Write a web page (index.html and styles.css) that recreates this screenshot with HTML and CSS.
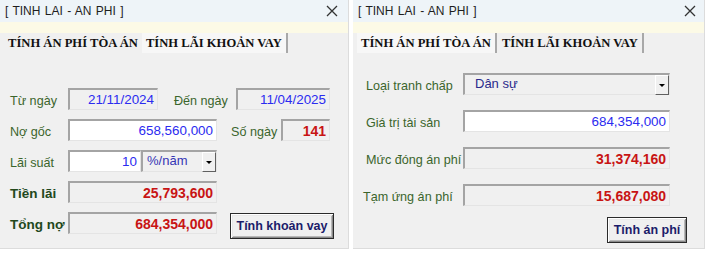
FILE: index.html
```html
<!DOCTYPE html>
<html>
<head>
<meta charset="utf-8">
<link rel="stylesheet" href="styles.css">
</head>
<body>
<div class="screen">
  <div class="win win-left">
    <div class="titlebar">
      <span class="title">[ TINH LAI - AN PHI ]</span>
      <svg class="close" width="12" height="12" viewBox="0 0 12 12"><path d="M1 1L11 11M11 1L1 11" stroke="#333" stroke-width="1.3" fill="none"/></svg>
    </div>
    <div class="strip"></div>
    <div class="tabs">
      <div class="tab">TÍNH ÁN PHÍ TÒA ÁN</div>
      <div class="tab active sep">TÍNH LÃI KHOẢN VAY</div>
    </div>
    <div class="panel loan">
      <div class="row">
        <span class="lbl w58">Từ ngày</span>
        <div class="fld ro blue w90">21/11/2024</div>
        <span class="lbl lbl-den">Đến ngày</span>
        <div class="fld ro blue w94">11/04/2025</div>
      </div>
      <div class="row">
        <span class="lbl w58">Nợ gốc</span>
        <div class="fld white blue w149">658,560,000</div>
        <span class="lbl lbl-so">Số ngày</span>
        <div class="fld ro red w49">141</div>
      </div>
      <div class="row">
        <span class="lbl w58">Lãi suất</span>
        <div class="fld white blue w73">10</div>
        <div class="fld ro combo w76"><span class="combo-text">%/năm</span><span class="arrow"></span></div>
      </div>
      <div class="row">
        <span class="lbl bold w58">Tiền lãi</span>
        <div class="fld ro red w149">25,793,600</div>
      </div>
      <div class="row">
        <span class="lbl bold w58">Tổng nợ</span>
        <div class="fld ro red w149">684,354,000</div>
        <button class="btn btn-loan">Tính khoản vay</button>
      </div>
    </div>
  </div>

  <div class="win win-right">
    <div class="titlebar">
      <span class="title">[ TINH LAI - AN PHI ]</span>
      <svg class="close" width="12" height="12" viewBox="0 0 12 12"><path d="M1 1L11 11M11 1L1 11" stroke="#333" stroke-width="1.3" fill="none"/></svg>
    </div>
    <div class="strip"></div>
    <div class="tabs">
      <div class="tab active sep">TÍNH ÁN PHÍ TÒA ÁN</div>
      <div class="tab sep">TÍNH LÃI KHOẢN VAY</div>
    </div>
    <div class="panel fee">
      <div class="row">
        <span class="lbl w97">Loại tranh chấp</span>
        <div class="fld ro combo w207"><span class="combo-text navy">Dân sự</span><span class="arrow"></span></div>
      </div>
      <div class="row">
        <span class="lbl w97">Giá trị tài sản</span>
        <div class="fld white blue w207">684,354,000</div>
      </div>
      <div class="row">
        <span class="lbl w97">Mức đóng án phí</span>
        <div class="fld ro red w207">31,374,160</div>
      </div>
      <div class="row">
        <span class="lbl w97 lbl-tam">Tạm ứng án phí</span>
        <div class="fld ro red w207">15,687,080</div>
      </div>
      <div class="btn-row">
        <button class="btn btn-fee">Tính án phí</button>
      </div>
    </div>
  </div>
</div>
</body>
</html>
```

FILE: styles.css
```css
* { box-sizing: border-box; }
html, body { margin: 0; padding: 0; background: #ffffff; }
body { width: 709px; height: 256px; overflow: hidden; font-family: "Liberation Sans", Arial, sans-serif; }

.screen { display: flex; gap: 4px; align-items: flex-start; }

.win {
  height: 249px;
  background: #f0f0f0;
  display: flex;
  flex-direction: column;
  border-right: 1px solid #dcdcdc;
  border-bottom: 1px solid #dcdcdc;
}
.win-left { width: 349px; }
.win-right { width: 352px; }

.titlebar {
  height: 22px;
  background: #eef4f8;
  display: flex;
  align-items: center;
  justify-content: space-between;
  padding: 0 10px 0 5px;
}
.win-right .titlebar { padding-right: 8px; }
.title { font-size: 12px; color: #1e1e1e; white-space: pre; word-spacing: 1px; }
.close { display: block; }

.strip { height: 11px; background: #fcfae6; }

.tabs {
  height: 20px;
  display: flex;
  padding-left: 4px;
  background: #f0f0f0;
}
.tab {
  font-family: "Liberation Serif", "Times New Roman", serif;
  font-weight: bold;
  font-size: 12.6px;
  color: #111;
  padding: 3px 4px 0 4px;
  height: 20px;
  white-space: nowrap;
}
.tab.active { background: #f7f7f7; }
.tab.sep { border-right: 2px solid #a8a8a8; margin-right: 1px; }

.panel { flex: 1; display: flex; flex-direction: column; }
.loan { padding: 35px 0 0 10px; gap: 9px; }
.fee { padding: 20px 0 0 13px; gap: 15px; }

.row { display: flex; align-items: center; height: 22px; }

.lbl { font-size: 12.6px; color: #3b652c; white-space: nowrap; padding-top: 3px; }
.lbl.bold { font-weight: bold; color: #22481c; font-size: 13.5px; }
.w58 { width: 58px; }
.w97 { width: 97px; }
.lbl-den { margin-left: 16px; width: 62px; }
.lbl-so { margin-left: 14px; width: 50px; }
.lbl-tam { margin-left: -3px; width: 100px; }

.fld {
  height: 22px;
  border-top: 2px solid #a4a4a4;
  border-left: 2px solid #a4a4a4;
  border-bottom: 1px solid #e4e4e4;
  border-right: 1px solid #e4e4e4;
  display: flex;
  align-items: center;
  justify-content: flex-end;
  padding-right: 3px;
  font-size: 13.4px;
  white-space: nowrap;
}
.fld.white { background: #ffffff; }
.fld.ro { background: #f0f0f0; }
.blue { color: #2b2bf0; }
.red { color: #c81414; font-weight: bold; font-size: 14px; }

.w90 { width: 90px; }
.w94 { width: 94px; }
.w149 { width: 149px; }
.w49 { width: 49px; }
.w73 { width: 73px; }
.w76 { width: 76px; }
.w207 { width: 207px; }

.combo { justify-content: space-between; padding-right: 0; padding-left: 4px; }
.combo-text { color: #3535b5; font-size: 13px; padding-bottom: 2px; }
.combo-text.navy { color: #2a2a8c; padding-left: 6px; }
.arrow {
  width: 14px;
  height: 20px;
  background: #f0f0f0;
  border-right: 1px solid #606060;
  border-bottom: 1px solid #606060;
  border-left: 1px solid #ffffff;
  border-top: 1px solid #ffffff;
  display: flex;
  align-items: center;
  justify-content: center;
}
.arrow::before {
  content: "";
  width: 0;
  height: 0;
  border-left: 3px solid transparent;
  border-right: 3px solid transparent;
  border-top: 3px solid #000;
  margin-top: 1px;
}

.btn {
  font-family: "Liberation Sans", Arial, sans-serif;
  font-weight: bold;
  font-size: 12.5px;
  color: #1c1c6a;
  background: #f0f0f0;
  border: 1px solid #2a2a2a;
  box-shadow: inset 1px 1px 0 #ffffff, inset -1px -1px 0 #8a8a8a, inset 2px 2px 0 #e8e8e8, inset -2px -2px 0 #b8b8b8;
  height: 26px;
  padding: 0;
  white-space: nowrap;
}
.btn-loan { width: 104px; margin-left: 13px; align-self: flex-start; margin-top: 1px; height: 26px; }
.btn-row { display: flex; justify-content: flex-end; padding-right: 17px; margin-top: -4px; }
.btn-fee { width: 80px; }
```
